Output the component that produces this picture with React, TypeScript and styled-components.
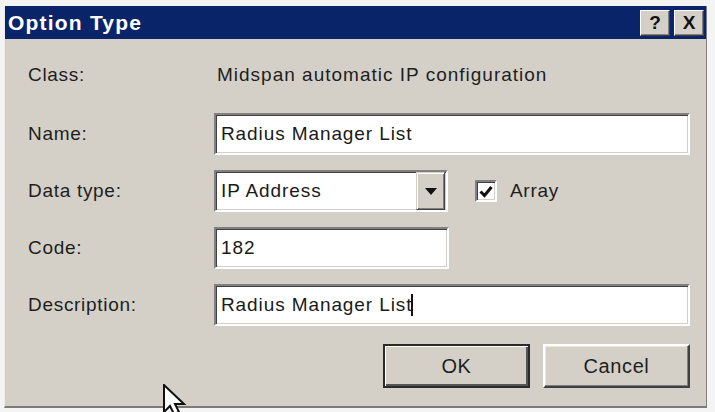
import React from 'react';
import styled, { createGlobalStyle } from 'styled-components';

const GlobalStyle = createGlobalStyle`
  html, body {
    margin: 0;
    padding: 0;
    background: #fff;
  }
  * {
    box-sizing: border-box;
  }
`;

const Page = styled.div`
  width: 715px;
  height: 412px;
  padding: 6px 8px 4px 4px;
  position: relative;
  overflow: hidden;
  background: #f4f4f4;
  font-family: 'Liberation Sans', Arial, sans-serif;
`;

const Dialog = styled.div`
  width: 703px;
  height: 402px;
  display: flex;
  flex-direction: column;
  background: #d4d0c8;
  border-right: 1px solid #808080;
  border-bottom: 2px solid #7a7a7a;
  border-left: 1px solid #eeece8;
`;

const TitleBar = styled.header`
  height: 33px;
  flex-shrink: 0;
  background: #0a246a;
  display: flex;
  align-items: center;
  justify-content: space-between;
  padding: 0 2px 0 3px;
`;

const Title = styled.h1`
  margin: 0;
  color: #fff;
  font-size: 21px;
  font-weight: bold;
  letter-spacing: 1.2px;
`;

const TitleButtons = styled.div`
  display: flex;
  gap: 4px;
`;

const TitleButton = styled.div`
  width: 30px;
  height: 26px;
  background: #d4d0c8;
  border: 1px solid;
  border-color: #fff #404040 #404040 #fff;
  box-shadow: inset -1px -1px #808080;
  display: flex;
  align-items: center;
  justify-content: center;
  font-size: 19px;
  font-weight: bold;
  color: #111;
`;

const Body = styled.div`
  flex: 1;
  padding: 13px 16px 0 23px;
  display: flex;
  flex-direction: column;
`;

const Form = styled.div`
  display: grid;
  grid-template-columns: 186px 1fr;
  grid-template-rows: 46px repeat(4, 42px);
  row-gap: 15px;
  align-items: center;
`;

const Label = styled.div`
  font-size: 19px;
  letter-spacing: 0.7px;
  color: #1e1e1e;
`;

const Value = styled.div`
  font-size: 19px;
  letter-spacing: 1px;
  color: #1e1e1e;
  padding-left: 3px;
`;

const Sunken = styled.div<{ $width?: number }>`
  height: 42px;
  width: ${p => (p.$width ? `${p.$width}px` : '100%')};
  background: #fff;
  border: 2px solid;
  border-color: #808080 #fff #fff #808080;
  box-shadow: inset 1px 1px #404040, inset -1px -1px #d4d0c8;
  display: flex;
  align-items: center;
  padding-left: 5px;
  font-size: 19px;
  letter-spacing: 0.9px;
  color: #1a1a1a;
`;

const Caret = styled.span`
  display: inline-block;
  width: 1.5px;
  height: 22px;
  background: #111;
  vertical-align: middle;
  margin-left: -1px;
`;

const TypeRow = styled.div`
  display: flex;
  align-items: center;
`;

const SelectText = styled.span`
  flex: 1;
`;

const DropButton = styled.div`
  width: 29px;
  height: 100%;
  margin-right: 1px;
  background: #d4d0c8;
  border: 1px solid;
  border-color: #d4d0c8 #404040 #404040 #d4d0c8;
  box-shadow: inset 1px 1px #fff, inset -1px -1px #808080;
  display: flex;
  align-items: center;
  justify-content: center;
`;

const Check = styled.label`
  margin-left: 27px;
  display: flex;
  align-items: center;
  gap: 13px;
  font-size: 19px;
  letter-spacing: 0.7px;
  color: #1e1e1e;
`;

const CheckBox = styled.span`
  width: 22px;
  height: 22px;
  background: #fff;
  border: 2px solid;
  border-color: #808080 #fff #fff #808080;
  box-shadow: inset 1px 1px #404040, inset -1px -1px #d4d0c8;
  display: flex;
  align-items: center;
  justify-content: center;
`;

const Actions = styled.div`
  margin-top: 18px;
  display: flex;
  justify-content: flex-end;
  gap: 13px;
`;

const Button = styled.button<{ $default?: boolean }>`
  width: 147px;
  height: 44px;
  background: #d4d0c8;
  font-family: 'Liberation Sans', Arial, sans-serif;
  font-size: 20px;
  letter-spacing: 0.6px;
  color: #1e1e1e;
  padding: 0;
  border: 2px solid;
  border-color: ${p => (p.$default ? '#2a2a2a' : '#fff #404040 #404040 #fff')};
  box-shadow: ${p =>
    p.$default
      ? 'inset 1px 1px #fff, inset -2px -2px #555'
      : 'inset -1px -1px #808080, inset 1px 1px #e8e6e2'};
`;

const Pointer = styled.svg`
  position: absolute;
  left: 162px;
  top: 384px;
`;

export default function App() {
  return (
    <Page>
      <GlobalStyle />
      <Dialog>
        <TitleBar>
          <Title>Option Type</Title>
          <TitleButtons>
            <TitleButton>?</TitleButton>
            <TitleButton>X</TitleButton>
          </TitleButtons>
        </TitleBar>
        <Body>
          <Form>
            <Label>Class:</Label>
            <Value>Midspan automatic IP configuration</Value>

            <Label>Name:</Label>
            <Sunken>Radius Manager List</Sunken>

            <Label>Data type:</Label>
            <TypeRow>
              <Sunken $width={234}>
                <SelectText>IP Address</SelectText>
                <DropButton>
                  <svg width="12" height="7" viewBox="0 0 12 7">
                    <path d="M0 0h12L6 7z" fill="#111" />
                  </svg>
                </DropButton>
              </Sunken>
              <Check>
                <CheckBox>
                  <svg width="14" height="13" viewBox="0 0 14 13">
                    <path d="M1.5 6.5l4 4L12.5 2" stroke="#111" strokeWidth="3" fill="none" />
                  </svg>
                </CheckBox>
                Array
              </Check>
            </TypeRow>

            <Label>Code:</Label>
            <Sunken $width={235}>182</Sunken>

            <Label>Description:</Label>
            <Sunken>
              Radius Manager List<Caret />
            </Sunken>
          </Form>
          <Actions>
            <Button $default>OK</Button>
            <Button>Cancel</Button>
          </Actions>
        </Body>
      </Dialog>
      <Pointer width="26" height="30" viewBox="0 0 26 30">
        <path d="M2 1v27l6-6 4 8 5-2-4-8h9z" fill="#fff" stroke="#111" strokeWidth="2" />
      </Pointer>
    </Page>
  );
}
